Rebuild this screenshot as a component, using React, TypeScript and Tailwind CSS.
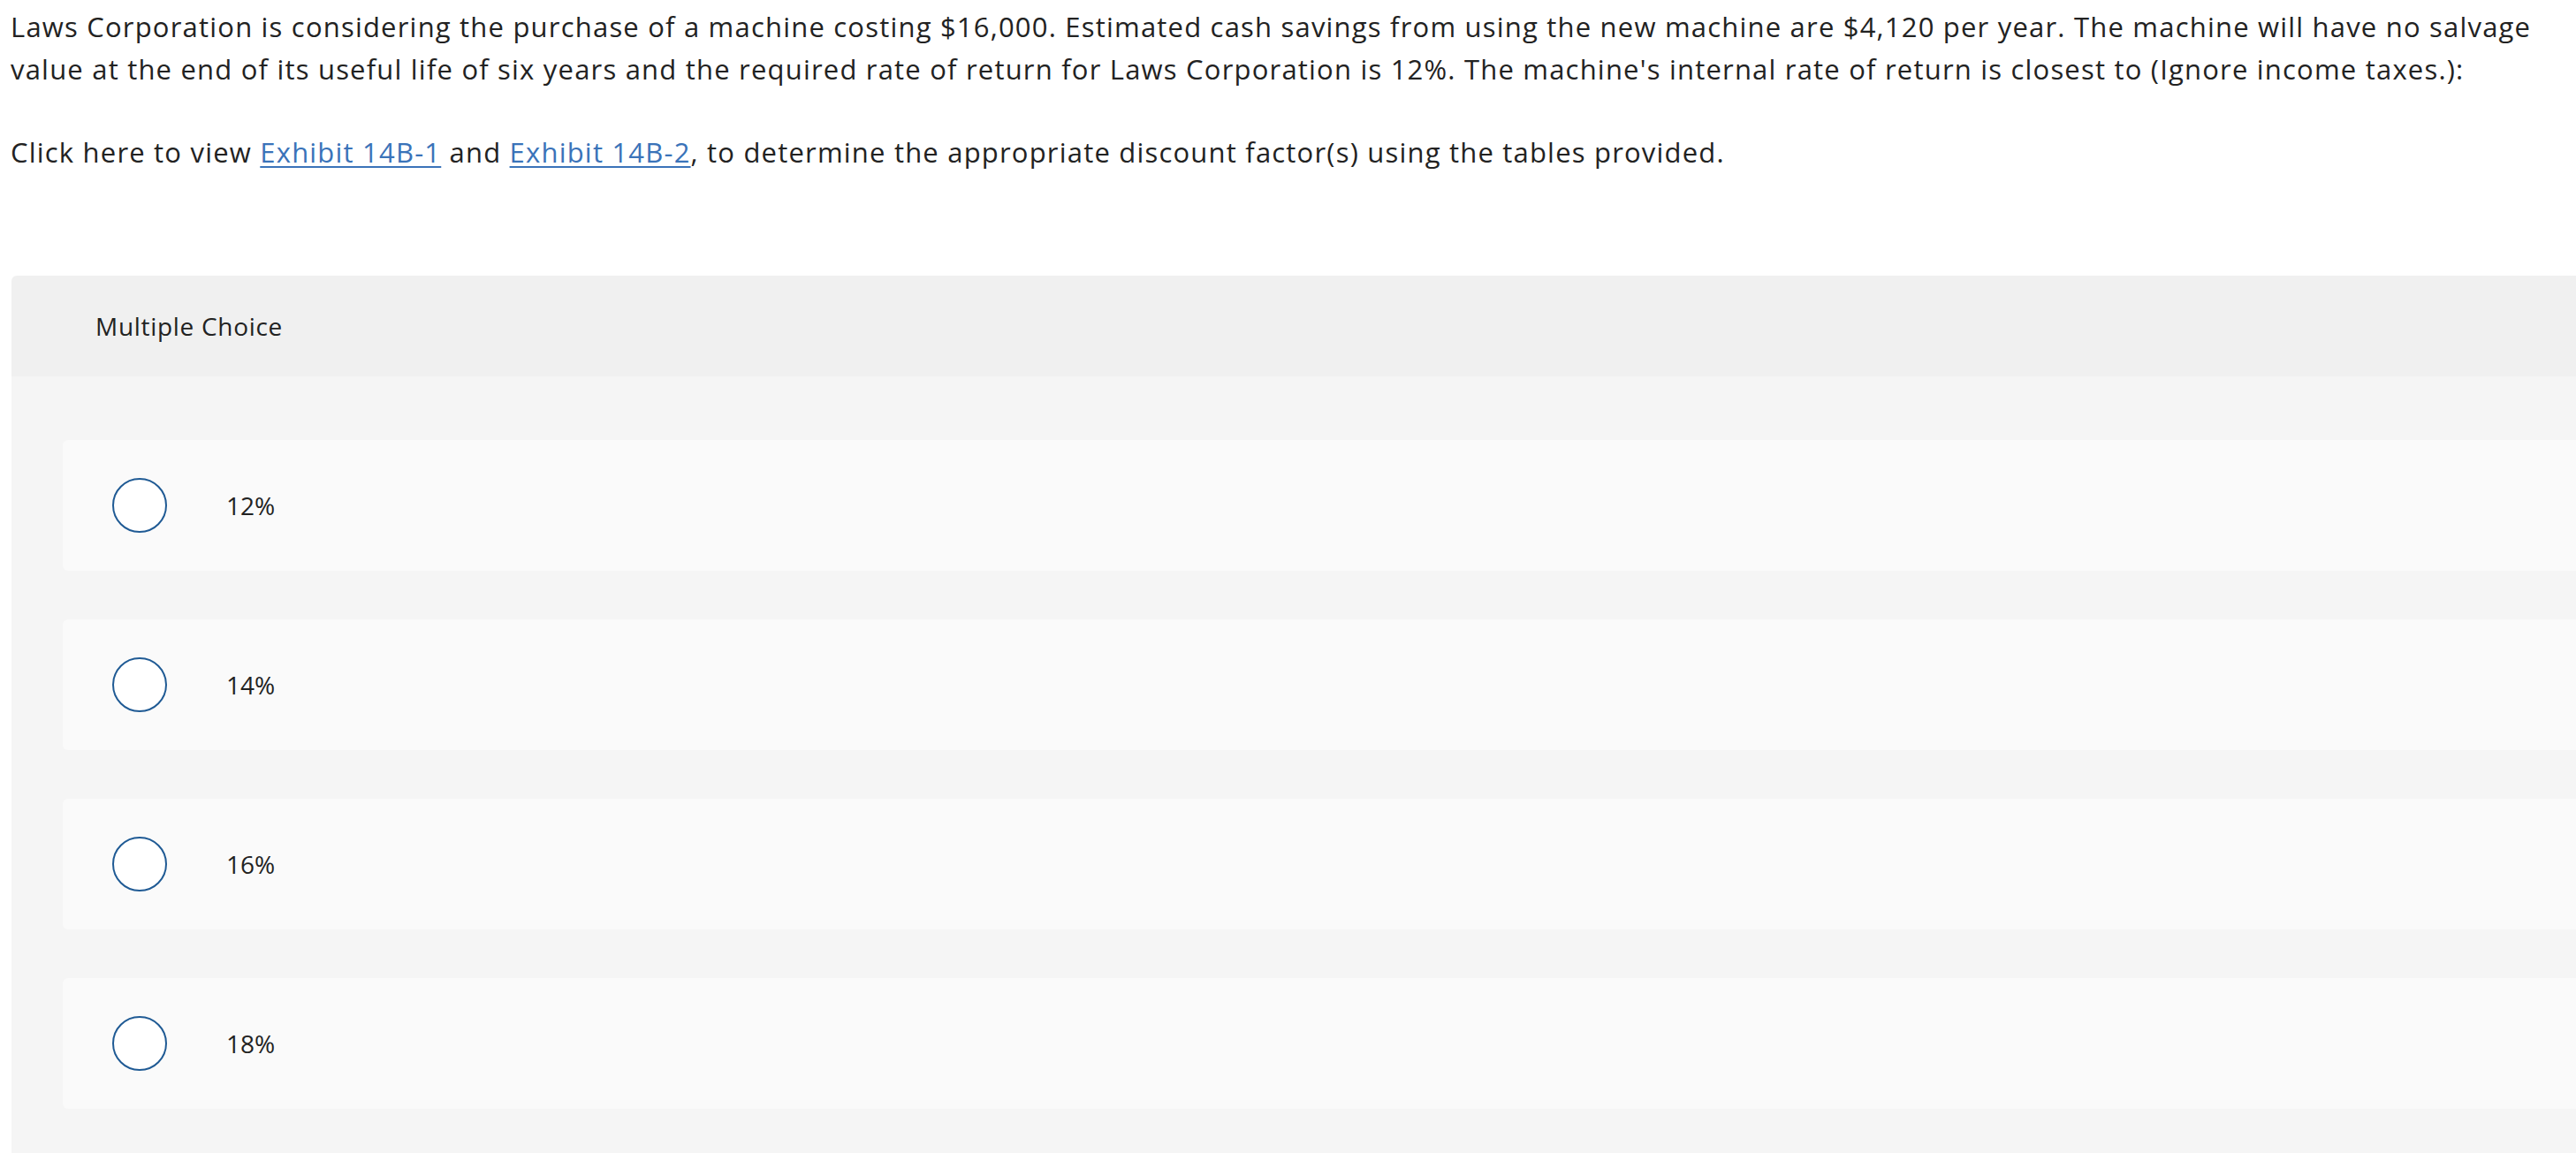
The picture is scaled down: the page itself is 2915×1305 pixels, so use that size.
import React from "react";

const options = ["12%", "14%", "16%", "18%"];

export default function App() {
  return (
    <div className="w-[2915px] h-[1305px] overflow-hidden bg-white text-[#222222]">
      <div className="pl-[12px] pt-[6px] font-['Open_Sans',sans-serif] text-[31px] leading-[48px] tracking-[1.2px]">
        <p className="whitespace-nowrap">
          Laws Corporation is considering the purchase of a machine costing $16,000. Estimated cash savings from using the new machine are $4,120 per year. The machine will have no salvage
          <br />
          value at the end of its useful life of six years and the required rate of return for Laws Corporation is 12%. The machine's internal rate of return is closest to (Ignore income taxes.):
        </p>
        <p className="mt-[46px] whitespace-nowrap">
          Click here to view{" "}
          <a className="text-[#3a73b9] underline decoration-2 underline-offset-[4px]" href="#">
            Exhibit 14B-1
          </a>{" "}
          and{" "}
          <a className="text-[#3a73b9] underline decoration-2 underline-offset-[4px]" href="#">
            Exhibit 14B-2
          </a>
          , to determine the appropriate discount factor(s) using the tables provided.
        </p>
      </div>
      <div className="ml-[13px] mt-[116px] w-[2960px] rounded-tl-[6px] overflow-hidden">
        <div className="h-[114px] bg-[#f0f0f0] flex items-center pl-[95px] font-['Open_Sans',sans-serif] text-[28px] tracking-[0.7px] text-[#222222]">
          Multiple Choice
        </div>
        <div className="bg-[#f5f5f5] pt-[72px] pb-[72px] pl-[58px] flex flex-col gap-[55px]">
          {options.map((o) => (
            <div key={o} className="h-[148px] bg-[#fafafa] rounded-[6px] flex items-center">
              <div className="ml-[56px] w-[62px] h-[62px] rounded-full border-[2px] border-[#1f5a94] bg-white" />
              <span className="ml-[67px] font-['Open_Sans',sans-serif] text-[28px] text-[#222222]">{o}</span>
            </div>
          ))}
        </div>
      </div>
    </div>
  );
}
